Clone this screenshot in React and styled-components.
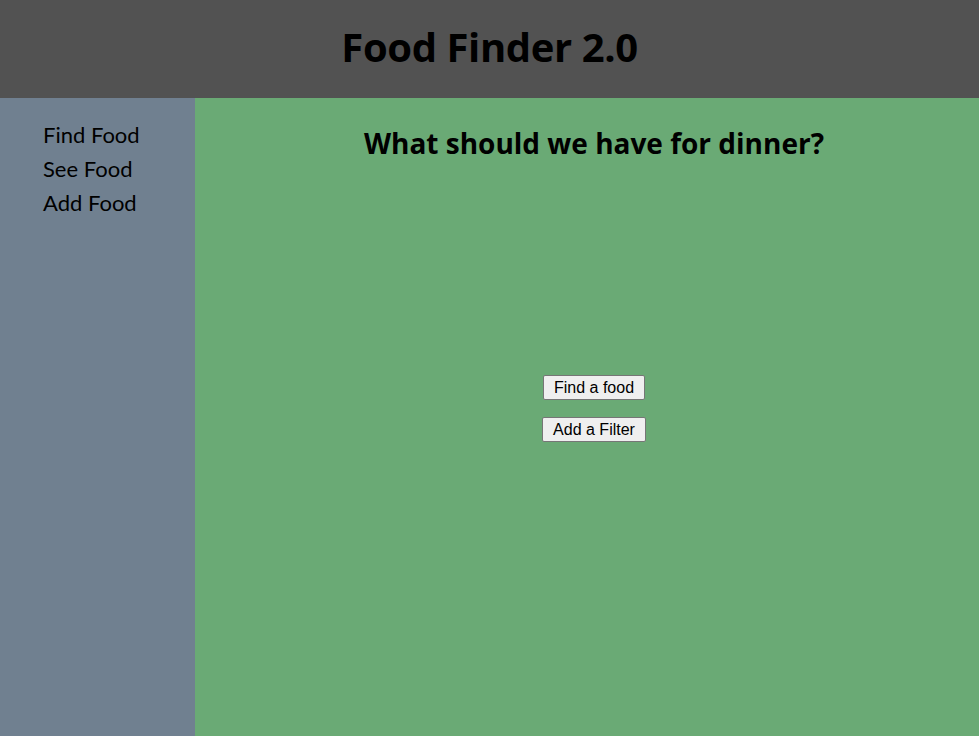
import React from 'react';
import styled, { createGlobalStyle } from 'styled-components';

const GlobalStyle = createGlobalStyle`
    html, body {
        margin: 0;
        padding: 0;
        height: 100%;
    }
    #root {
        height: 100%;
    }
`;

const App = () => {
    return (
        <>
            <GlobalStyle />
            <Page>
                <Header>
                    <Title>Food Finder 2.0</Title>
                </Header>
                <Body>
                    <Sidebar>
                        <NavItem>Find Food</NavItem>
                        <NavItem>See Food</NavItem>
                        <NavItem>Add Food</NavItem>
                    </Sidebar>
                    <Main>
                        <Heading>What should we have for dinner?</Heading>
                        <Actions>
                            <Button>Find a food</Button>
                            <Button>Add a Filter</Button>
                        </Actions>
                    </Main>
                </Body>
            </Page>
        </>
    );
};

const Page = styled.div`
    height: 736px;
    display: flex;
    flex-direction: column;
`;
const Header = styled.header`
    height: 98px;
    flex: 0 0 98px;
    box-sizing: border-box;
    padding-bottom: 6px;
    background: #525252;
    display: flex;
    align-items: center;
    justify-content: center;
`;
const Title = styled.h1`
    margin: 0;
    font-family: "Open Sans", "Liberation Sans", sans-serif;
    font-weight: 700;
    font-size: 40px;
    letter-spacing: -0.4px;
    color: #000;
`;
const Body = styled.div`
    flex: 1;
    display: flex;
`;
const Sidebar = styled.nav`
    width: 195px;
    flex: 0 0 195px;
    background: #708090;
    padding: 20px 0 0 43px;
    box-sizing: border-box;
    display: flex;
    flex-direction: column;
`;
const NavItem = styled.a`
    font-family: "Lato", "Noto Sans", sans-serif;
    font-size: 22px;
    line-height: 34px;
    color: #000;
    cursor: pointer;
`;
const Main = styled.main`
    flex: 1;
    background: #6aaa75;
    padding: 27px 0 0 14px;
    display: flex;
    flex-direction: column;
    align-items: center;
`;
const Heading = styled.h2`
    margin: 0;
    font-family: "Open Sans", "Noto Sans", sans-serif;
    font-weight: 700;
    font-size: 28px;
    line-height: 36px;
    color: #000;
`;
const Actions = styled.div`
    margin-top: 214px;
    display: flex;
    flex-direction: column;
    align-items: center;
    gap: 17px;
`;
const Button = styled.button`
    font-family: "Liberation Sans", Arial, sans-serif;
    font-size: 16px;
    line-height: 19px;
    padding: 2px 10px;
    color: #000;
    background: #efefef;
    border: 1px solid #767676;
    border-radius: 2px;
`;

export default App;
